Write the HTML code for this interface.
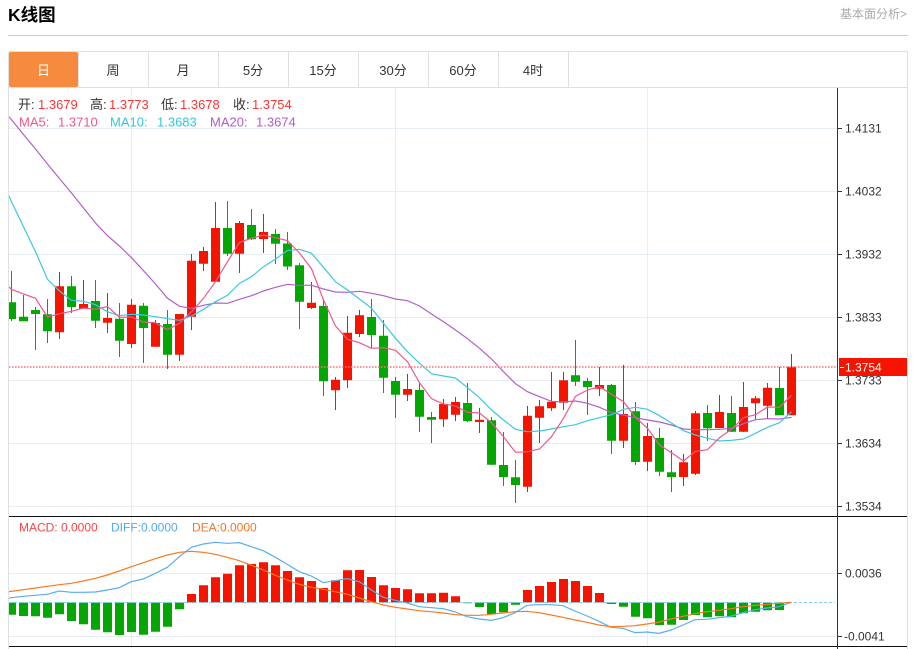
<!DOCTYPE html>
<html><head><meta charset="utf-8"><title>K线图</title>
<style>
html,body{margin:0;padding:0;background:#fff;width:915px;height:649px;overflow:hidden}
svg{position:absolute;left:0;top:0;display:block}
text{font-family:"Liberation Sans","Noto Sans CJK SC",sans-serif}
.ax{font-size:12px;fill:#333}
.tab{font-size:13px;fill:#333;text-anchor:middle}
.o{font-size:13px;fill:#333}
.r{font-size:13px;fill:#f33}
</style></head>
<body>
<svg width="915" height="649" viewBox="0 0 915 649" xmlns="http://www.w3.org/2000/svg">
<text x="8" y="21" font-size="17.5" font-weight="700" fill="#000">K线图</text>
<text x="907" y="18" font-size="12" fill="#aaa" text-anchor="end">基本面分析&gt;</text>
<path d="M8 35.5H908" stroke="#ccc" fill="none"/>
<path d="M8.5 649V51.5H907.5V649" stroke="#e0e0e0" fill="none"/>
<path d="M9 87.5H907" stroke="#e0e0e0"/>
<rect x="9" y="52" width="69" height="35" rx="2" fill="#f68b3f"/>
<path d="M78.5 52V87M148.5 52V87M218.5 52V87M288.5 52V87M358.5 52V87M428.5 52V87M498.5 52V87M568.5 52V87" stroke="#e0e0e0"/>
<text x="43.5" y="75" class="tab" style="fill:#fff">日</text>
<text x="113" y="75" class="tab">周</text>
<text x="183" y="75" class="tab">月</text>
<text x="253" y="75" class="tab">5分</text>
<text x="323" y="75" class="tab">15分</text>
<text x="393" y="75" class="tab">30分</text>
<text x="463" y="75" class="tab">60分</text>
<text x="533" y="75" class="tab">4时</text>

<path d="M9 128.5H837M9 191.5H837M9 254.5H837M9 317.5H837M9 380.5H837M9 443.5H837M9 506.5H837M9 573.5H837M9 636.5H837M131.5 88V647M395.5 88V647M647.5 88V647" stroke="#e6edf3" fill="none"/>

<!-- candles -->
<svg x="9" y="88" width="828" height="428" viewBox="9 88 828 428" overflow="hidden">
<path fill="none" stroke="#03a603" stroke-width="1" d="M11.5 271V321M23.5 295V321M35.5 307V350M47.5 299V343M71.5 276V313M95.5 280V328M119.5 303V357M143.5 303V363M167.5 310V369M227.5 201V256M251.5 209V240M275.5 229V264M287.5 232V270M299.5 263V329M323.5 299V396M371.5 299V348M383.5 320V393M395.5 377V418M419.5 383V432M431.5 412V443M467.5 383V422M491.5 417V465M503.5 432V486M515.5 460V503M575.5 340V386M587.5 378V415M611.5 384V454M635.5 402V465M659.5 428V476M671.5 450V492M707.5 405V441M731.5 396V432M779.5 367V415"/>
<path fill="none" stroke="#f51400" stroke-width="1" d="M59.5 272V339M83.5 280V309M107.5 293V333M131.5 299V348M155.5 320V347M179.5 314V361M191.5 254V330M203.5 247V271M215.5 202V282M239.5 221V273M263.5 214V253M311.5 282V309M335.5 377V410M347.5 316V388M359.5 310V337M407.5 374V401M443.5 399V427M455.5 397V421M479.5 408V433M527.5 406V492M539.5 400V443M551.5 372V411M563.5 372V410M599.5 367V396M623.5 365V448M647.5 423V471M683.5 454V486M695.5 411V475M719.5 395V428M743.5 382V432M755.5 396V419M767.5 383V419M791.5 354V415"/>
<path fill="none" stroke="#03a603" stroke-width="9" d="M11.5 302.3V319M23.5 316.7V321.3M35.5 310V314M47.5 314.3V331.3M71.5 286.3V307M95.5 301V320.7M119.5 318.7V340.7M143.5 305.7V328M167.5 324V354.7M227.5 228V253.7M251.5 225V239.3M275.5 234V243.7M287.5 243.5V266.5M299.5 265.3V301.7M323.5 306V381.3M371.5 317V335M383.5 335.7V377.7M395.5 381V394.7M419.5 390V416.7M431.5 417V419.7M467.5 403V421M491.5 420.3V464.7M503.5 465V477M515.5 477.3V485M575.5 375.3V381.7M587.5 381V387M611.5 385V440.7M635.5 411.3V462M659.5 438V471.7M671.5 472.3V477M707.5 413V428.3M731.5 413V431.7M779.5 388V415.3"/>
<path fill="none" stroke="#f51400" stroke-width="9" d="M59.5 286.3V332.3M83.5 304V308.7M107.5 318V322.7M131.5 304.7V344M155.5 323V346.7M179.5 314V354.7M191.5 260.7V316.7M203.5 251V263.7M215.5 228V281.7M239.5 223V253.7M263.5 232V239M311.5 302.7V308M335.5 379.7V390.3M347.5 332.7V380.3M359.5 315.3V334M407.5 389V394.7M443.5 404V419.3M455.5 402V414.7M479.5 419.7V422M527.5 415.7V486.7M539.5 406.3V417.7M551.5 401.7V408.3M563.5 380.3V402.7M599.5 385V388.7M623.5 414V440.7M647.5 436V461.7M683.5 462.3V477M695.5 413.3V473.7M719.5 412V428M743.5 407V431.7M755.5 398.3V403.3M767.5 387.7V405.7M791.5 366.7V415.3"/>
<polyline fill="none" stroke="#b35fc9" stroke-width="1.2" points="9,116.7 11.5,119.8 23.5,134.5 35.5,149 47.5,164 59.5,178.6 71.5,193 83.5,208 95.5,223 107.5,235.7 119.5,246 131.5,257.7 143.5,270.7 155.5,284 167.5,298.3 179.5,306.3 191.5,308.3 203.5,305.3 215.5,303 227.5,303.3 239.5,299.3 251.5,295.7 263.5,291 275.5,287.3 287.5,284.3 299.5,285.3 311.5,285.3 323.5,289 335.5,292 347.5,292.3 359.5,291.3 371.5,293.3 383.5,295.7 395.5,299 407.5,300.7 419.5,306 431.5,314 443.5,321.7 455.5,330 467.5,338.7 479.5,348.3 491.5,359 503.5,371.7 515.5,383.7 527.5,391.7 539.5,396.7 551.5,401.3 563.5,402 575.5,401 587.5,403.3 599.5,407.3 611.5,412.7 623.5,415 635.5,417.7 647.5,420 659.5,422 671.5,425 683.5,429 695.5,429.7 707.5,429.7 719.5,429.3 731.5,428.3 743.5,423.7 755.5,419.7 767.5,418.7 779.5,419 791.5,417.3"/>
<polyline fill="none" stroke="#3cc8e0" stroke-width="1.2" points="9,195.7 11.5,201.7 23.5,226.7 35.5,251.7 47.5,279.3 59.5,291 71.5,300.3 83.5,301.3 95.5,304.7 107.5,311.7 119.5,315.7 131.5,314.3 143.5,315 155.5,316.7 167.5,318.7 179.5,320.3 191.5,316 203.5,309.3 215.5,301.7 227.5,295.3 239.5,283.3 251.5,276.7 263.5,266.7 275.5,259 287.5,250.5 299.5,249.3 311.5,253.3 323.5,267.3 335.5,281.7 347.5,290 359.5,299 371.5,308.3 383.5,323.3 395.5,338.3 407.5,351.7 419.5,363.3 431.5,373.7 443.5,376 455.5,378 467.5,387.7 479.5,397.7 491.5,410 503.5,420 515.5,429.3 527.5,431.7 539.5,431 551.5,429 563.5,426.7 575.5,424.7 587.5,420.7 599.5,417.7 611.5,414.7 623.5,409.3 635.5,407.3 647.5,409.3 659.5,415.7 671.5,423 683.5,430.7 695.5,435 707.5,438.3 719.5,441 731.5,440.3 743.5,439 755.5,433.3 767.5,427.3 779.5,422.7 791.5,411.7"/>
<polyline fill="none" stroke="#f0588c" stroke-width="1.2" points="9,287 11.5,289.3 23.5,294 35.5,298.3 47.5,317 59.5,313.7 71.5,311.3 83.5,308 95.5,309.3 107.5,306.7 119.5,317.3 131.5,317 143.5,322 155.5,322.7 167.5,329.7 179.5,323.3 191.5,311.7 203.5,298.3 215.5,281.7 227.5,261.7 239.5,242.3 251.5,238.3 263.5,235 275.5,237.7 287.5,240.7 299.5,253 311.5,268.7 323.5,300 335.5,326 347.5,339.3 359.5,342.7 371.5,348.3 383.5,347.7 395.5,350.3 407.5,361.7 419.5,382.7 431.5,398.7 443.5,404 455.5,406 467.5,412.3 479.5,413 491.5,422.7 503.5,436.7 515.5,452.3 527.5,451.7 539.5,449 551.5,436.7 563.5,418.3 575.5,396.3 587.5,390 599.5,386.7 611.5,394.3 623.5,401.7 635.5,417.3 647.5,428.3 659.5,445 671.5,452.7 683.5,461 695.5,451.3 707.5,449.7 719.5,437.7 731.5,429.3 743.5,417.7 755.5,414.7 767.5,407 779.5,407.3 791.5,395.3"/>
<path d="M9 367H836" stroke="#f77" stroke-width="1.4" stroke-dasharray="1.6 1.4" fill="none"/>
</svg>

<!-- MACD -->
<svg x="9" y="517" width="828" height="129" viewBox="9 517 828 129" overflow="hidden">
<path fill="none" stroke="#03a603" stroke-width="9" d="M11.5 602.5V614.7M23.5 602.5V616M35.5 602.5V616.3M47.5 602.5V617.7M59.5 602.5V614.3M71.5 602.5V621M83.5 602.5V624.3M95.5 602.5V629.7M107.5 602.5V632.3M119.5 602.5V635M131.5 602.5V632M143.5 602.5V634.7M155.5 602.5V631.7M167.5 602.5V626.7M179.5 602.5V609.3M467.5 602.5V603.3M479.5 602.5V607M491.5 602.5V614M503.5 602.5V612.3M515.5 602.5V604.7M611.5 602.5V604M623.5 602.5V606.7M635.5 602.5V616.7M647.5 602.5V618.3M659.5 602.5V625M671.5 602.5V624.7M683.5 602.5V620M695.5 602.5V615M707.5 602.5V617.3M719.5 602.5V616.3M731.5 602.5V617.3M743.5 602.5V613.3M755.5 602.5V611.7M767.5 602.5V610.3M779.5 602.5V610"/>
<path fill="none" stroke="#f51400" stroke-width="9" d="M191.5 602.5V594M203.5 602.5V585.3M215.5 602.5V577.3M227.5 602.5V573.7M239.5 602.5V565.3M251.5 602.5V564M263.5 602.5V562.3M275.5 602.5V565.3M287.5 602.5V571M299.5 602.5V577.3M311.5 602.5V581M323.5 602.5V588M335.5 602.5V580.3M347.5 602.5V570.3M359.5 602.5V570M371.5 602.5V577M383.5 602.5V585.3M395.5 602.5V588M407.5 602.5V589.3M419.5 602.5V593.3M431.5 602.5V593.3M443.5 602.5V592.7M455.5 602.5V596.3M527.5 602.5V590M539.5 602.5V586M551.5 602.5V582M563.5 602.5V579M575.5 602.5V581M587.5 602.5V586M599.5 602.5V593"/>
<path d="M9 602.5H835" stroke="#7fd0ee" stroke-dasharray="3 2" fill="none"/>
<g transform="translate(0,510) scale(.33333)" fill="none">
<polyline vector-effect="non-scaling-stroke" stroke="#58aef0" stroke-width="1.2" points="27,265 34,263 70,259 106,256 142,253 178,243 214,247 250,247 286,246 322,240 358,233 394,215 430,207 466,190 502,172 538,140 574,112 610,102 646,97 682,100 718,98 754,110 790,122 826,142 862,163 898,185 934,198 970,218 1006,212 1042,206 1078,215 1114,240 1150,262 1186,271 1222,279 1258,290 1294,293 1330,296 1366,306"/>
<polyline vector-effect="non-scaling-stroke" stroke="#f87a22" stroke-width="1.2" points="27,245 70,239 106,234 142,229 178,224 214,220 250,213 286,205 322,195 358,183 394,170 430,158 466,146 502,135 538,127 574,124 610,127 646,133 682,142 718,152 754,166 790,180 826,196 862,210 898,223 934,232 970,238 1006,245 1042,253 1078,264 1114,275 1150,285 1186,292 1222,297 1258,302 1294,305 1330,309 1366,314"/>
</g>
<g transform="translate(455,510) scale(.33333)" fill="none">
<polyline vector-effect="non-scaling-stroke" stroke="#58aef0" stroke-width="1.2" points="1,306 36,320 72,327 108,331 144,323 180,308 216,286 252,284 288,284 324,287 360,303 396,318 432,334 468,352 504,355 540,368 576,366 612,370 648,360 684,345 720,329 756,328 792,323 828,319 864,308 900,299 936,294 972,290 1008,277"/>
<polyline vector-effect="non-scaling-stroke" stroke="#f87a22" stroke-width="1.2" points="1,314 36,316 72,316 108,313 144,309 180,305 216,304 252,308 288,315 324,322 360,330 396,337 432,345 468,350 504,349 540,347 576,342 612,336 648,327 684,319 720,311 756,305 792,301 828,296 864,290 900,286 936,283 972,280 1008,277"/>
</g>
</svg>

<!-- frame lines / axis -->
<path d="M9 516.5H907M9 646.5H907" stroke="#111" fill="none"/>
<path d="M837.5 88V649" stroke="#333" fill="none"/>
<path d="M838 128.5H842M838 191.5H842M838 254.5H842M838 317.5H842M838 380.5H842M838 443.5H842M838 506.5H842M838 573.5H842M838 636.5H842" stroke="#333" fill="none"/>
<text x="845" y="132.5" class="ax">1.4131</text>
<text x="845" y="195.5" class="ax">1.4032</text>
<text x="845" y="258.5" class="ax">1.3932</text>
<text x="845" y="321.5" class="ax">1.3833</text>
<text x="845" y="384.5" class="ax">1.3733</text>
<text x="845" y="447.5" class="ax">1.3634</text>
<text x="845" y="510.5" class="ax">1.3534</text>
<text x="845" y="577.5" class="ax">0.0036</text>
<text x="844" y="640.5" class="ax">-0.0041</text>
<rect x="839" y="358" width="68" height="18" fill="#f51400"/>
<path d="M840 367.5H844" stroke="#fff"/>
<text x="845" y="371.5" font-size="12" fill="#fff">1.3754</text>

<!-- legends -->
<text x="18" y="109" class="o">开:</text><text x="38" y="109" class="r">1.3679</text>
<text x="90" y="109" class="o">高:</text><text x="109" y="109" class="r">1.3773</text>
<text x="161" y="109" class="o">低:</text><text x="180" y="109" class="r">1.3678</text>
<text x="233" y="109" class="o">收:</text><text x="252" y="109" class="r">1.3754</text>
<g font-size="13">
<text x="19" y="126.5" fill="#f0588c">MA5:</text><text x="58" y="126.5" fill="#f0588c">1.3710</text>
<text x="110" y="126.5" fill="#30c8e0">MA10:</text><text x="157" y="126.5" fill="#30c8e0">1.3683</text>
<text x="210" y="126.5" fill="#b05cc8">MA20:</text><text x="256" y="126.5" fill="#b05cc8">1.3674</text>
</g>
<g font-size="12">
<text x="19" y="531.5" fill="#f44">MACD:</text><text x="61" y="531.5" fill="#f44">0.0000</text>
<text x="111" y="531.5" fill="#55aaee">DIFF:</text><text x="141" y="531.5" fill="#55aaee">0.0000</text>
<text x="192" y="531.5" fill="#f87322">DEA:</text><text x="220" y="531.5" fill="#f87322">0.0000</text>
</g>
</svg>
</body></html>
